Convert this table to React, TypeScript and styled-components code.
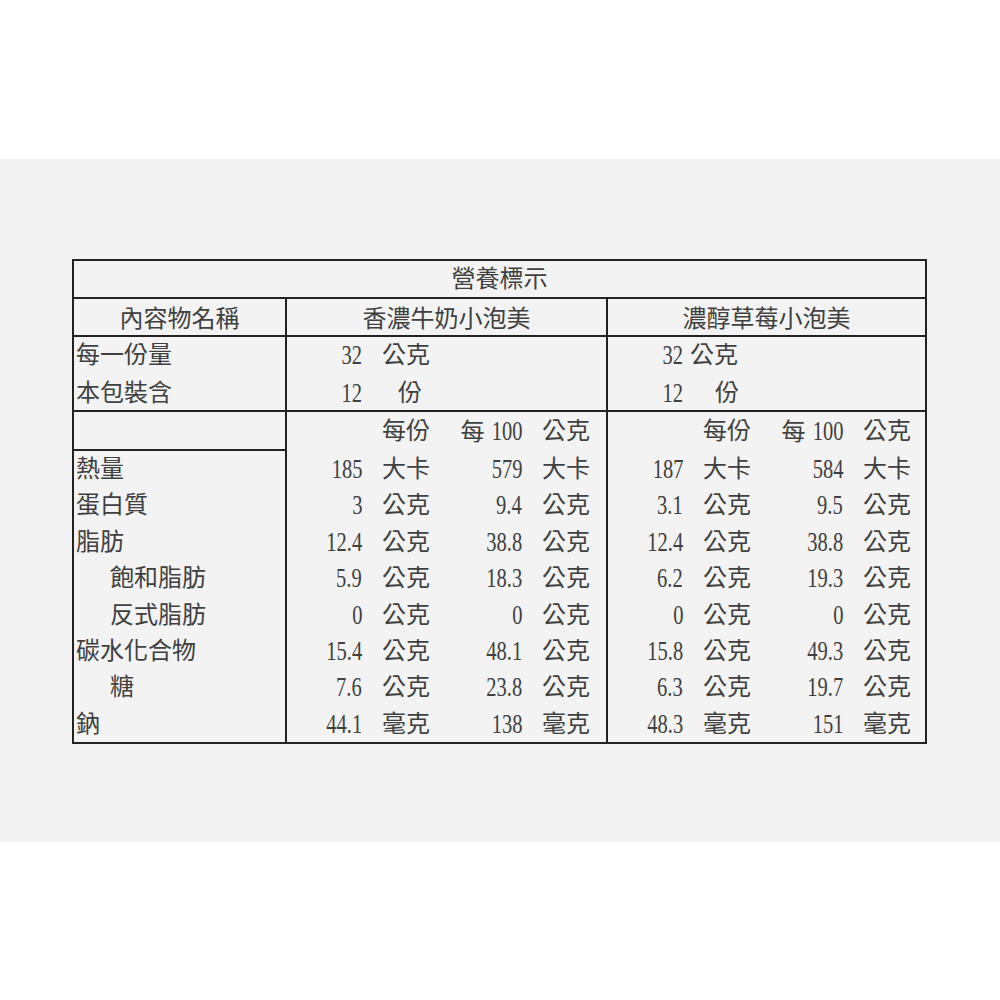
import styled, { createGlobalStyle } from "styled-components";

const GlobalStyle = createGlobalStyle`
  body {
    margin: 0;
    background: #fff;
    font-family: "Liberation Serif", "Noto Sans CJK TC", serif;
  }
`;

interface Product {
  name: string;
  perServing: string;
  servings: string;
  compact?: boolean;
  values: string[][];
}

const nutrients = [
  { label: "熱量" },
  { label: "蛋白質" },
  { label: "脂肪" },
  { label: "飽和脂肪", sub: true },
  { label: "反式脂肪", sub: true },
  { label: "碳水化合物" },
  { label: "糖", sub: true },
  { label: "鈉" },
];

const products: Product[] = [
  {
    name: "香濃牛奶小泡美",
    perServing: "32",
    servings: "12",
    values: [
      ["185", "大卡", "579", "大卡"],
      ["3", "公克", "9.4", "公克"],
      ["12.4", "公克", "38.8", "公克"],
      ["5.9", "公克", "18.3", "公克"],
      ["0", "公克", "0", "公克"],
      ["15.4", "公克", "48.1", "公克"],
      ["7.6", "公克", "23.8", "公克"],
      ["44.1", "毫克", "138", "毫克"],
    ],
  },
  {
    name: "濃醇草莓小泡美",
    perServing: "32",
    servings: "12",
    compact: true,
    values: [
      ["187", "大卡", "584", "大卡"],
      ["3.1", "公克", "9.5", "公克"],
      ["12.4", "公克", "38.8", "公克"],
      ["6.2", "公克", "19.3", "公克"],
      ["0", "公克", "0", "公克"],
      ["15.8", "公克", "49.3", "公克"],
      ["6.3", "公克", "19.7", "公克"],
      ["48.3", "毫克", "151", "毫克"],
    ],
  },
];

const Band = styled.div`
  margin-top: 159px;
  height: 683px;
  background: #f3f3f3;
  padding-top: 100px;
  box-sizing: border-box;
`;

const Table = styled.div`
  width: 855px;
  margin-left: 72px;
  border: 2px solid #222;
  box-sizing: border-box;
  color: #404040;
  font-size: 24px;
`;

const Title = styled.div`
  height: 38px;
  line-height: 36px;
  text-align: center;
  border-bottom: 2px solid #222;
  box-sizing: border-box;
`;

const Body = styled.div`
  display: grid;
  grid-template-columns: 213px 321px 1fr;
  grid-template-rows: 38px 75px 39px 291px;
`;

const Cell = styled.div<{ $divider?: boolean; $rule?: boolean }>`
  box-sizing: border-box;
  display: flex;
  flex-direction: column;
  border-right: ${(p) => (p.$divider ? "2px solid #222" : "none")};
  border-bottom: ${(p) => (p.$rule ? "2px solid #222" : "none")};
`;

const HeadText = styled.div`
  flex: 1;
  display: flex;
  align-items: center;
  justify-content: center;
  padding-bottom: 2px;
`;

const Label = styled.div<{ $indent?: boolean; $h: number }>`
  height: ${(p) => p.$h}px;
  line-height: ${(p) => p.$h}px;
  padding-left: ${(p) => (p.$indent ? "36px" : "2px")};
  white-space: nowrap;
`;

const ValueRow = styled.div<{ $h: number }>`
  display: grid;
  grid-template-columns: 75px 80px 80px 1fr;
  height: ${(p) => p.$h}px;
  line-height: ${(p) => p.$h}px;
  white-space: nowrap;
`;

const Num = styled.span`
  text-align: right;
`;

const Per = styled.span`
  margin-right: -3px;
`;

const Digits = styled.span`
  display: inline-block;
  font-size: 27px;
  transform: scaleX(0.76);
  transform-origin: right center;
`;

const Unit = styled.span<{ $pad?: number }>`
  padding-left: ${(p) => p.$pad ?? 20}px;
`;

const ROW = 36.4;
const SERVING = 37.5;

export default function App() {
  return (
    <>
      <GlobalStyle />
      <Band>
        <Table>
          <Title>營養標示</Title>
          <Body>
            <Cell $divider $rule>
              <HeadText>內容物名稱</HeadText>
            </Cell>
            {products.map((p, i) => (
              <Cell key={p.name} $divider={i === 0} $rule>
                <HeadText>{p.name}</HeadText>
              </Cell>
            ))}

            <Cell $divider $rule>
              <Label $h={SERVING}>每一份量</Label>
              <Label $h={SERVING}>本包裝含</Label>
            </Cell>
            {products.map((p, i) => (
              <Cell key={p.name} $divider={i === 0} $rule>
                <ValueRow $h={SERVING}>
                  <Num>
                    <Digits>{p.perServing}</Digits>
                  </Num>
                  <Unit $pad={p.compact ? 7 : 20}>公克</Unit>
                </ValueRow>
                <ValueRow $h={SERVING}>
                  <Num>
                    <Digits>{p.servings}</Digits>
                  </Num>
                  <Unit $pad={p.compact ? 32 : 36}>份</Unit>
                </ValueRow>
              </Cell>
            ))}

            <Cell $divider $rule />
            {products.map((p, i) => (
              <Cell key={p.name} $divider={i === 0}>
                <ValueRow $h={38}>
                  <span />
                  <Unit>每份</Unit>
                  <Num>
                    <Per>每</Per>
                    <Digits>100</Digits>
                  </Num>
                  <Unit>公克</Unit>
                </ValueRow>
              </Cell>
            ))}

            <Cell $divider>
              {nutrients.map((n) => (
                <Label key={n.label} $indent={n.sub} $h={ROW}>
                  {n.label}
                </Label>
              ))}
            </Cell>
            {products.map((p, i) => (
              <Cell key={p.name} $divider={i === 0}>
                {p.values.map((v, j) => (
                  <ValueRow key={j} $h={ROW}>
                    <Num>
                      <Digits>{v[0]}</Digits>
                    </Num>
                    <Unit>{v[1]}</Unit>
                    <Num>
                      <Digits>{v[2]}</Digits>
                    </Num>
                    <Unit>{v[3]}</Unit>
                  </ValueRow>
                ))}
              </Cell>
            ))}
          </Body>
        </Table>
      </Band>
    </>
  );
}
